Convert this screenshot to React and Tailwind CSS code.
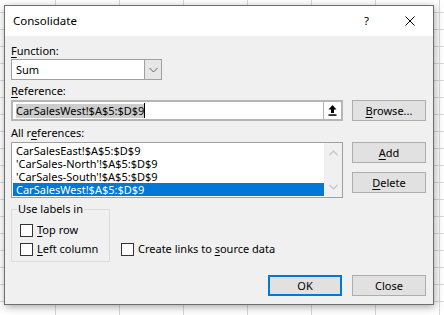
const refs = [
  "CarSalesEast!$A$5:$D$9",
  "'CarSales-North'!$A$5:$D$9",
  "'CarSales-South'!$A$5:$D$9",
  'CarSalesWest!$A$5:$D$9',
]

function Button({ children, primary, className = '' }) {
  return (
    <div
      className={`flex h-[21px] w-[74px] items-center justify-center bg-[#e1e1e1] ${
        primary ? 'border-2 border-[#0078d7]' : 'border border-[#adadad]'
      } ${className}`}
    >
      {children}
    </div>
  )
}

function Check({ children, className = '' }) {
  return (
    <div className={`flex h-[16px] items-center ${className}`}>
      <span className="h-[13px] w-[13px] border border-[#333] bg-white" />
      <span className="ml-[4px]">{children}</span>
    </div>
  )
}

function Chevron({ up }) {
  return (
    <svg width="9" height="6" viewBox="0 0 9 6" className="text-[#c2c2c2]">
      <path d={up ? 'M0.5 5 L4.5 1 L8.5 5' : 'M0.5 1 L4.5 5 L8.5 1'} fill="none" stroke="currentColor" strokeWidth="1.2" />
    </svg>
  )
}

export default function App() {
  const cells = Array.from({ length: 8 * 20 }, (_, i) => i)

  return (
    <div className="relative h-[315px] w-[444px] overflow-hidden bg-white font-['Noto_Sans',sans-serif] text-[11px] text-black">
      {/* sheet grid behind the dialog */}
      <div className="-ml-[8px] -mt-[4px] grid grid-cols-[repeat(8,64px)] auto-rows-[17px]">
        {cells.map((i) => (
          <div key={i} className="border-b border-r border-[#d8d8d8]" />
        ))}
      </div>

      <div className="absolute left-[4px] top-[5px] flex h-[300px] w-[430px] flex-col border border-[#6e6e6e] bg-[#f0f0f0] shadow-[1px_2px_8px_rgba(0,0,0,0.35)]">
        <div className="flex h-[30px] items-center bg-white pl-[8px] pr-[18px] text-[11.5px]">
          <span>Consolidate</span>
          <span className="ml-auto">?</span>
          <svg width="10" height="10" viewBox="0 0 10 10" className="ml-[36px]">
            <path d="M0.5 0.5 L9.5 9.5 M9.5 0.5 L0.5 9.5" stroke="#000" strokeWidth="1" />
          </svg>
        </div>

        <div className="flex flex-col pl-[6px] pr-[7px] leading-[16px]">
          <div className="mt-[7px]">
            <u className="underline-offset-2">F</u>unction:
          </div>
          <div className="flex h-[21px] w-[151px] border border-[#a0a0a0] bg-white">
            <span className="flex-1 pl-[4px] leading-[19px]">Sum</span>
            <span className="flex w-[17px] items-center justify-center border-l border-[#a0a0a0] bg-[#e6e6e6]">
              <svg width="9" height="6" viewBox="0 0 9 6">
                <path d="M0.5 1 L4.5 5 L8.5 1" fill="none" stroke="#606060" strokeWidth="1" />
              </svg>
            </span>
          </div>

          <div className="mt-[3px]">
            <u className="underline-offset-2">R</u>eference:
          </div>
          <div className="mt-[1px] flex">
            <div className="flex h-[21px] w-[332px] border-2 border-[#b5b5b5] bg-white">
              <div className="flex flex-1 items-center pl-[3px]">
                <span className="bg-[#cccccc] leading-[14px]">CarSalesWest!$A$5:$D$9</span>
                <span className="h-[15px] w-[1px] bg-black" />
              </div>
              <span className="flex w-[18px] items-center justify-center border-l border-[#b5b5b5]">
                <svg width="9" height="11" viewBox="0 0 9 11">
                  <path d="M4.5 0 L8.5 4.5 H6 V8 H3 V4.5 H0.5 Z" fill="#000" />
                  <rect x="0.5" y="9.3" width="8" height="1.5" fill="#000" />
                </svg>
              </span>
            </div>
            <Button className="ml-[9px]">
              <span>
                <u className="underline-offset-2">B</u>rowse...
              </span>
            </Button>
          </div>

          <div className="mt-[4px]">
            All r<u className="underline-offset-2">e</u>ferences:
          </div>
          <div className="mt-[1px] flex">
            <div className="flex h-[56px] w-[332px] border border-[#a0a0a0] bg-white">
              <div className="flex-1 pl-[1px] pt-[1px]">
                {refs.map((r, i) => (
                  <div
                    key={r}
                    className={`h-[13px] pl-[3px] leading-[13px] ${i === 3 ? 'bg-[#0078d7] text-white' : ''}`}
                  >
                    {r}
                  </div>
                ))}
              </div>
              <div className="flex w-[18px] flex-col items-center justify-between bg-[#f0f0f0] py-[7px]">
                <Chevron up />
                <Chevron />
              </div>
            </div>
            <div className="ml-[9px] flex flex-col">
              <Button>
                <span>
                  <u className="underline-offset-2">A</u>dd
                </span>
              </Button>
              <Button className="mt-[9px]">
                <span>
                  <u className="underline-offset-2">D</u>elete
                </span>
              </Button>
            </div>
          </div>

          <div className="mt-[3px] flex">
            <fieldset className="w-[99px] border border-[#dcdcdc] pb-[4px] pl-[8px] pt-[5px]">
              <legend className="ml-[-3px] px-[1px]">Use labels in</legend>
              <Check>
                <u className="underline-offset-2">T</u>op row
              </Check>
              <Check className="mt-[3px]">
                <u className="underline-offset-2">L</u>eft column
              </Check>
            </fieldset>
            <Check className="ml-[11px] mt-[40px]">
              Create links to <u className="underline-offset-2">s</u>ource data
            </Check>
          </div>

          <div className="mt-[13px] flex justify-end">
            <Button primary>OK</Button>
            <Button className="ml-[10px]">Close</Button>
          </div>
        </div>
      </div>
    </div>
  )
}
